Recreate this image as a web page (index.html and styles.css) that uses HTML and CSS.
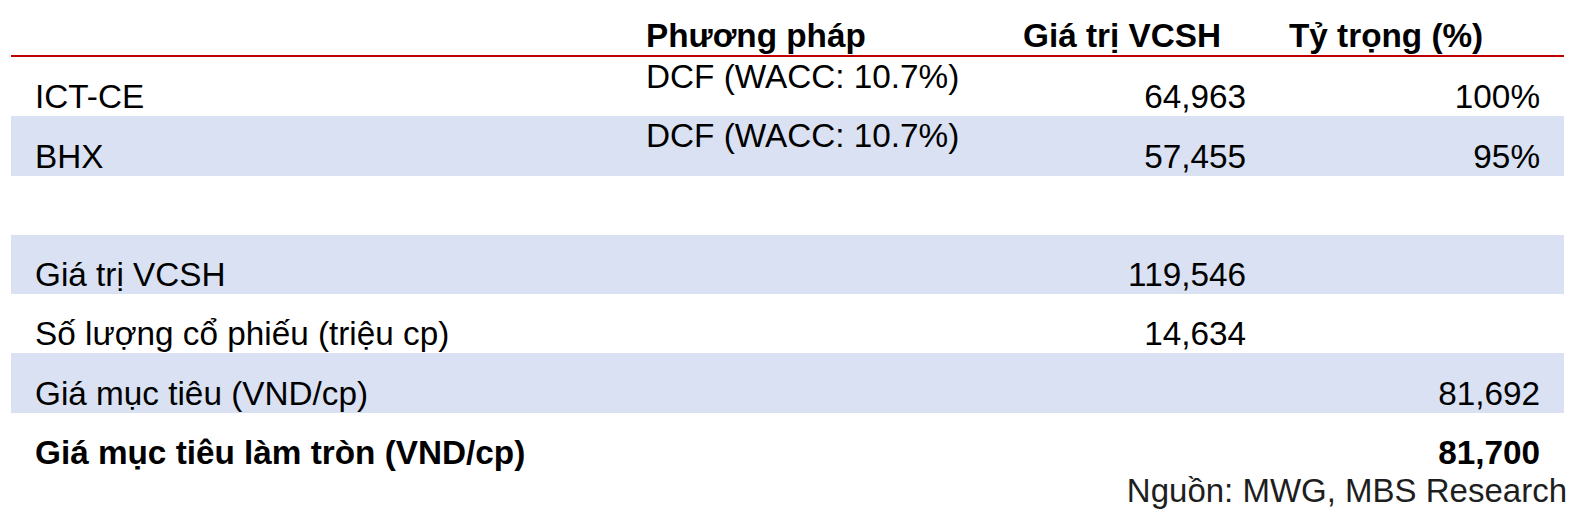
FILE: index.html
```html
<!DOCTYPE html>
<html lang="vi">
<head>
<meta charset="utf-8">
<title>Định giá MWG</title>
<link rel="stylesheet" href="styles.css">
</head>
<body>
<div class="sheet">
  <div class="row head">
    <div class="cell c1"></div>
    <div class="cell c2">Phương pháp</div>
    <div class="cell c3">Giá trị VCSH</div>
    <div class="cell c4">Tỷ trọng (%)</div>
  </div>
  <div class="row r59">
    <div class="cell c1">ICT-CE</div>
    <div class="cell c2 top">DCF (WACC: 10.7%)</div>
    <div class="cell c3 num">64,963</div>
    <div class="cell c4 num">100%</div>
  </div>
  <div class="row r60 band">
    <div class="cell c1">BHX</div>
    <div class="cell c2 top">DCF (WACC: 10.7%)</div>
    <div class="cell c3 num">57,455</div>
    <div class="cell c4 num">95%</div>
  </div>
  <div class="row r59">
    <div class="cell c1"></div>
    <div class="cell c2"></div>
    <div class="cell c3"></div>
    <div class="cell c4"></div>
  </div>
  <div class="row r59 band">
    <div class="cell c1">Giá trị VCSH</div>
    <div class="cell c2"></div>
    <div class="cell c3 num">119,546</div>
    <div class="cell c4"></div>
  </div>
  <div class="row r59">
    <div class="cell c1">Số lượng cổ phiếu (triệu cp)</div>
    <div class="cell c2"></div>
    <div class="cell c3 num">14,634</div>
    <div class="cell c4"></div>
  </div>
  <div class="row r60 band">
    <div class="cell c1">Giá mục tiêu (VND/cp)</div>
    <div class="cell c2"></div>
    <div class="cell c3"></div>
    <div class="cell c4 num">81,692</div>
  </div>
  <div class="row r59 bold">
    <div class="cell c1">Giá mục tiêu làm tròn (VND/cp)</div>
    <div class="cell c2"></div>
    <div class="cell c3"></div>
    <div class="cell c4 num">81,700</div>
  </div>
  <div class="source">Nguồn: MWG, MBS Research</div>
</div>
</body>
</html>
```
FILE: styles.css
```css
html, body {
  margin: 0;
  padding: 0;
  background: #ffffff;
}

body {
  font-family: "Liberation Sans", Arial, sans-serif;
  font-size: 33.3px;
  color: #000000;
}

.sheet {
  width: 1553px;
  margin-left: 11px;
}

.row {
  display: grid;
  grid-template-columns: 632px 357px 262px 302px;
  align-items: end;
  white-space: nowrap;
}

.head {
  height: 55px;
  border-bottom: 2px solid #c00000;
  font-weight: bold;
}

.r59 { height: 59px; }
.r60 { height: 60px; }

.band { background: #d9e1f2; }

.bold { font-weight: bold; }

.cell {
  line-height: normal;
  min-height: 1px;
}

.c1 { padding-left: 24px; }
.c2 { padding-left: 3px; }
.c3 { padding-left: 23px; padding-right: 16px; }
.c4 { padding-left: 27px; padding-right: 24px; }

.num { text-align: right; }

.top {
  align-self: start;
  padding-top: 1px;
}

.source {
  font-size: 33px;
  line-height: normal;
  text-align: right;
  color: #1e1e1e;
  margin-right: -3px;
}
```
